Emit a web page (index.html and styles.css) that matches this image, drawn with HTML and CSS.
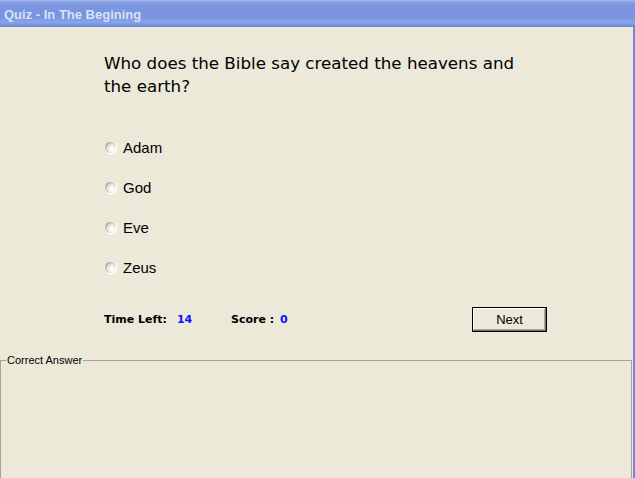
FILE: index.html
```html
<!DOCTYPE html>
<html>
<head>
<meta charset="utf-8">
<link rel="stylesheet" href="styles.css">
</head>
<body>
<div class="window">
  <div class="titlebar"><span class="title">Quiz - In The Begining</span></div>
  <div class="frame">
    <div class="client">
      <div class="quiz">
        <div class="question">Who does the Bible say created the heavens and the earth?</div>
        <div class="options">
          <label class="option"><span class="radio"></span><span>Adam</span></label>
          <label class="option"><span class="radio"></span><span>God</span></label>
          <label class="option"><span class="radio"></span><span>Eve</span></label>
          <label class="option"><span class="radio"></span><span>Zeus</span></label>
        </div>
        <div class="status">
          <span class="label">Time Left:</span><span class="value time">14</span>
          <span class="label score">Score :</span><span class="value sc">0</span>
          <button class="next">Next</button>
        </div>
      </div>
      <fieldset class="group">
        <legend>Correct Answer</legend>
      </fieldset>
    </div>
    <div class="rborder"></div>
  </div>
</div>
</body>
</html>
```

FILE: styles.css
```css
html, body {
  margin: 0;
  padding: 0;
  width: 635px;
  height: 478px;
  overflow: hidden;
  background: #ece9d8;
}
.window {
  display: flex;
  flex-direction: column;
  width: 635px;
  height: 478px;
}
.titlebar {
  height: 27px;
  flex: none;
  background: linear-gradient(to bottom, #a9bcef 0px, #8aa3e6 2px, #7b95e0 5px, #7a94df 18px, #8aa6ea 22px, #7f9ae4 24px, #6c86d9 26px, #6c86d9 27px);
  display: flex;
  align-items: center;
  padding-left: 4px;
  box-sizing: border-box;
}
.title {
  font-family: "Liberation Sans", sans-serif;
  font-weight: bold;
  font-size: 13px;
  color: #d8e2f8;
  margin-top: 1px;
}
.frame {
  flex: 1;
  display: flex;
}
.client {
  flex: 1;
  display: flex;
  flex-direction: column;
}
.rborder {
  width: 2px;
  background: #7286dc;
}
.quiz {
  padding-left: 104px;
  padding-top: 25px;
  height: 327px;
  box-sizing: border-box;
}
.question {
  width: 420px;
  font-family: "DejaVu Sans", sans-serif;
  font-size: 16.7px;
  line-height: 23px;
  color: #000;
}
.options {
  margin-top: 29px;
  display: flex;
  flex-direction: column;
}
.option {
  height: 40px;
  display: flex;
  align-items: center;
  font-family: "Liberation Sans", sans-serif;
  font-size: 15px;
  color: #000;
}
.radio {
  width: 11px;
  height: 11px;
  border-radius: 50%;
  margin-left: 1px;
  margin-right: 7px;
  background: radial-gradient(circle at 62% 62%, #ffffff 0%, #f6f5f0 30%, #d6d4c9 55%, #8f8d83 78%, #6f6d65 100%);
  box-shadow: 0.5px 0.5px 0 1px #ffffff;
}
.status {
  margin-top: 19px;
  display: flex;
  align-items: center;
  height: 26px;
  font-family: "DejaVu Sans", sans-serif;
  font-weight: bold;
  font-size: 11px;
}
.label { color: #000; }
.value { color: #1010ff; margin-left: 10px; }
.value.sc { margin-left: 6px; }
.score { margin-left: 38px; }
.value.time { width: 16px; }
.next {
  margin-left: auto;
  margin-right: 86px;
  width: 75px;
  height: 25px;
  background: #ece9d8;
  border: 1px solid #000;
  box-shadow: inset -1px -1px 0 #716f64, inset 1px 1px 0 #fff, inset -2px -2px 0 #aca899;
  font-family: "Liberation Sans", sans-serif;
  font-size: 13px;
  font-weight: normal;
  color: #000;
  padding: 0;
}
.group {
  flex: 1;
  margin: 0 1px 0 0;
  padding: 0;
  border: 1px solid #a6a49a;
  border-bottom: none;
  min-width: 0;
}
.group legend {
  margin-left: 5px;
  padding: 0 1px;
  font-family: "Liberation Sans", sans-serif;
  font-size: 11px;
  color: #000;
}
```
